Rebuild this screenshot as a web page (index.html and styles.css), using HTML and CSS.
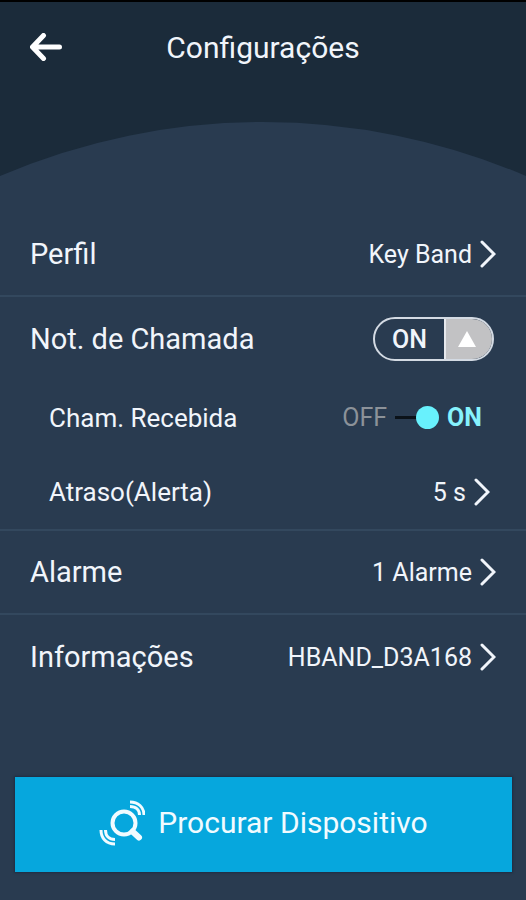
FILE: index.html
```html
<!DOCTYPE html>
<html lang="pt-BR">
<head>
<meta charset="utf-8">
<meta name="viewport" content="width=device-width, initial-scale=1">
<title>Configurações</title>
<link rel="stylesheet" href="styles.css">
</head>
<body>
<header class="header">
  <div class="bar">
    <button class="back" type="button" aria-label="Voltar">
      <svg viewBox="0 0 32 28" width="32" height="28" aria-hidden="true"><path d="M29.500 14H3M13.500 2.500L2.500 14L13.500 25.500"/></svg>
    </button>
    <h1 class="title">Configurações</h1>
  </div>
  <svg class="arc" viewBox="0 0 526 54" preserveAspectRatio="none" aria-hidden="true"><path d="M0 54A668 668 0 0 1 526 54Z"/></svg>
</header>
<main class="list">
  <a class="row" href="#perfil">
    <span class="label">Perfil</span>
    <span class="value">Key Band</span>
    <svg class="chevron" viewBox="0 0 16 28" aria-hidden="true"><path d="M2 2L14 14L2 26"/></svg>
  </a>
  <section class="group">
    <div class="row">
      <label class="label" for="calls">Not. de Chamada</label>
      <label class="pill" for="calls">
        <input class="pill-input" type="checkbox" id="calls" checked>
        <span class="pill-text">ON</span>
        <span class="pill-knob"><svg viewBox="0 0 18 16" width="18" height="16" aria-hidden="true"><path d="M9 0L18 16H0Z"/></svg></span>
      </label>
    </div>
    <div class="row sub">
      <label class="label" for="incoming">Cham. Recebida</label>
      <span class="switch">
        <span class="off">OFF</span>
        <input class="slider" type="checkbox" id="incoming" checked>
        <span class="on">ON</span>
      </span>
    </div>
    <a class="row sub" href="#atraso">
      <span class="label">Atraso(Alerta)</span>
      <span class="value">5 s</span>
      <svg class="chevron" viewBox="0 0 16 28" aria-hidden="true"><path d="M2 2L14 14L2 26"/></svg>
    </a>
  </section>
  <a class="row" href="#alarme">
    <span class="label">Alarme</span>
    <span class="value">1 Alarme</span>
    <svg class="chevron" viewBox="0 0 16 28" aria-hidden="true"><path d="M2 2L14 14L2 26"/></svg>
  </a>
  <a class="row last" href="#informacoes">
    <span class="label">Informações</span>
    <span class="value">HBAND_D3A168</span>
    <svg class="chevron" viewBox="0 0 16 28" aria-hidden="true"><path d="M2 2L14 14L2 26"/></svg>
  </a>
</main>
<footer class="footer">
  <button class="find" type="button">
    <svg class="find-icon" viewBox="0 0 46 46" width="46" height="46" aria-hidden="true">
      <circle cx="25" cy="23" r="11.500"/>
      <path class="handle" d="M33.500 31.500L40 37.500"/>
      <path class="wave" d="M31 2C39 2 45 7 45 15M31 6.500C37 6.500 40.500 10 40.500 15"/>
      <path class="wave" d="M2 30C2 38 7 44 16 44M6.500 30C6.500 36 10 39.500 16 39.500"/>
    </svg>
    <span>Procurar Dispositivo</span>
  </button>
</footer>
</body>
</html>
```
FILE: styles.css
```css
* {
  box-sizing: border-box;
}

body {
  margin: 0;
  min-height: 100vh;
  background: #293b50;
  color: #f1f5fb;
  font-family: Roboto, "Liberation Sans", sans-serif;
}

.header {
  background: #1b2b3a;
  border-top: 2px solid #000;
}

.bar {
  display: grid;
  grid-template-columns: 32px 1fr 32px;
  align-items: center;
  height: 120px;
  padding: 0 30px 30px;
}

.back {
  display: flex;
  padding: 0;
  border: 0;
  background: none;
}

.back path {
  fill: none;
  stroke: #fff;
  stroke-width: 5;
  stroke-linecap: round;
  stroke-linejoin: round;
}

.title {
  margin: 0;
  padding-top: 2px;
  font-size: 30px;
  font-weight: 400;
  line-height: 40px;
  text-align: center;
}

.arc {
  display: block;
  width: 100%;
  height: 54px;
  fill: #293b50;
}

.list {
  padding-top: 37px;
}

.row {
  display: flex;
  align-items: center;
  gap: 8px;
  height: 84px;
  padding: 0 30px;
  border-bottom: 2px solid #33485e;
  color: inherit;
  font-size: 25px;
  text-decoration: none;
}

.group {
  border-bottom: 2px solid #33485e;
}

.group .row {
  border-bottom: 0;
}

.row.last {
  border-bottom: 0;
}

.row.sub {
  height: 74px;
  padding: 0 36px 0 49px;
}

.label {
  flex: 1;
  font-size: 29px;
}

.sub .label {
  font-size: 26px;
}

.chevron {
  width: 16px;
  height: 28px;
  fill: none;
  stroke: #f1f5fb;
  stroke-width: 3;
  stroke-linecap: round;
}

.pill {
  display: flex;
  width: 121px;
  height: 44px;
  margin-right: 2px;
  overflow: hidden;
  border: 2px solid #d3dae3;
  border-radius: 22px;
  font-size: 25px;
  font-weight: 500;
}

.pill-input {
  position: absolute;
  opacity: 0;
}

.pill-text,
.pill-knob {
  display: flex;
  align-items: center;
  justify-content: center;
}

.pill-text {
  flex: 1;
}

.pill-knob {
  width: 48px;
  padding-right: 4px;
  border-left: 2px solid #e6e8ec;
  background: #c2c2c4;
  fill: #fff;
}

.switch {
  display: flex;
  align-items: center;
  gap: 8px;
  padding: 0 8px 2px 0;
  font-size: 25px;
}

.off {
  color: #8c9299;
}

.on {
  color: #86f2fd;
  font-weight: 700;
}

.slider {
  appearance: none;
  display: flex;
  align-items: center;
  width: 44px;
  height: 24px;
  margin: 0;
  background: linear-gradient(#0b1219, #0b1219) left center / 24px 3px no-repeat;
}

.slider::before {
  content: "";
  width: 23px;
  height: 23px;
  border-radius: 50%;
  background: #68f1fd;
}

.slider:checked::before {
  margin-left: auto;
}

.footer {
  padding: 78px 14px 28px 15px;
}

.find {
  display: flex;
  align-items: center;
  justify-content: center;
  gap: 13px;
  width: 100%;
  height: 95px;
  padding: 0 0 4px;
  border: 0;
  background: #06a7dd;
  box-shadow: 0 0 2px 1px #202d42;
  color: #f1fbff;
  font-family: inherit;
  font-size: 30px;
}

.find-icon {
  fill: none;
  stroke: #f1fbff;
  stroke-width: 4;
}

.handle {
  stroke-width: 6;
  stroke-linecap: round;
}

.wave {
  stroke-width: 3;
}
```
